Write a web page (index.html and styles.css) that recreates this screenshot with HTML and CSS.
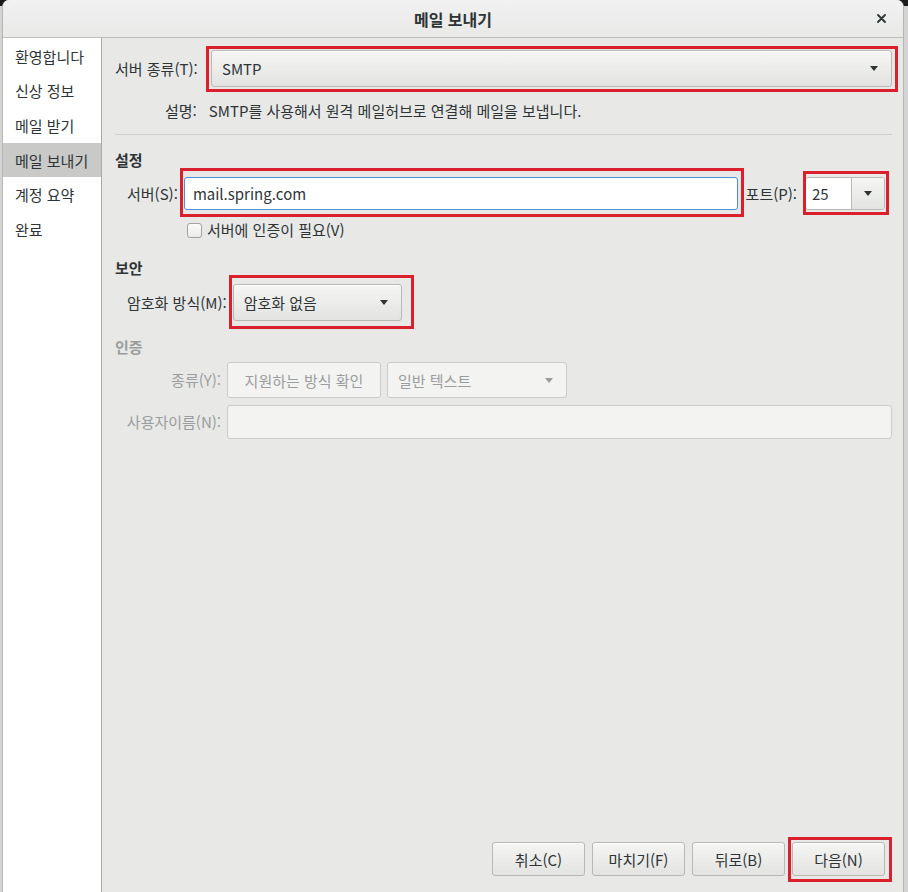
FILE: index.html
```html
<!DOCTYPE html>
<html lang="ko">
<head>
<meta charset="utf-8">
<title>메일 보내기</title>
<link rel="stylesheet" href="styles.css">
</head>
<body>
<div class="dialog">
  <header class="titlebar">
    <span class="title">메일 보내기</span>
    <span class="close"><svg width="9" height="9" viewBox="0 0 9 9"><path d="M1 1L8 8M8 1L1 8" stroke="#2e3436" stroke-width="1.8" stroke-linecap="round"/></svg></span>
  </header>
  <div class="main">
    <nav class="sidebar">
      <div class="step">환영합니다</div>
      <div class="step">신상 정보</div>
      <div class="step">메일 받기</div>
      <div class="step active">메일 보내기</div>
      <div class="step">계정 요약</div>
      <div class="step">완료</div>
    </nav>
    <section class="content">
      <div class="row type-row">
        <span class="label type-label">서버 종류(T):</span>
        <div class="combo combo-wide mark mark-smtp"><span>SMTP</span><i class="arrow"></i></div>
      </div>
      <div class="desc"><span class="desc-label">설명:</span><span>SMTP를 사용해서 원격 메일허브로 연결해 메일을 보냅니다.</span></div>
      <div class="sep"></div>
      <h3 class="heading heading-settings">설정</h3>
      <div class="row server-row">
        <span class="label server-label">서버(S):</span>
        <div class="entry focus mark mark-server">mail.spring.com</div>
        <span class="label port-label">포트(P):</span>
        <div class="spin mark mark-port"><span class="spin-value">25</span><span class="spin-btn"><i class="arrow"></i></span></div>
      </div>
      <div class="check-row"><span class="checkbox"></span><span>서버에 인증이 필요(V)</span></div>
      <h3 class="heading heading-security">보안</h3>
      <div class="row enc-row">
        <span class="label enc-label">암호화 방식(M):</span>
        <div class="combo combo-enc mark mark-enc"><span>암호화 없음</span><i class="arrow"></i></div>
      </div>
      <h3 class="heading heading-auth disabled">인증</h3>
      <div class="auth-grid">
        <span class="label disabled auth-label">종류(Y):</span>
        <div class="auth-type">
          <div class="btn btn-disabled check-btn">지원하는 방식 확인</div>
          <div class="combo combo-disabled"><span>일반 텍스트</span><i class="arrow"></i></div>
        </div>
        <span class="label disabled auth-label user-label">사용자이름(N):</span>
        <div class="entry entry-disabled user-entry"></div>
      </div>
      <div class="footer">
        <div class="btn">취소(C)</div>
        <div class="btn">마치기(F)</div>
        <div class="btn">뒤로(B)</div>
        <div class="btn mark mark-next">다음(N)</div>
      </div>
    </section>
  </div>
</div>
</body>
</html>
```
FILE: styles.css
```css
* { box-sizing: border-box; }
html, body { margin: 0; padding: 0; }
body {
  width: 908px;
  height: 892px;
  overflow: hidden;
  background: linear-gradient(#1a1a1a 0 6px, #d4d4d4 6px);
  font-family: "Noto Sans CJK KR", sans-serif;
  font-size: 15px;
  color: #2e3436;
}
.dialog {
  margin-left: 2px;
  width: 902px;
  height: 892px;
  display: flex;
  flex-direction: column;
  border-left: 1px solid #b6b6b3;
  border-right: 1px solid #b6b6b3;
  border-radius: 7px 7px 0 0;
  background: #e8e8e7;
  overflow: hidden;
}
.titlebar {
  height: 38px;
  flex: none;
  display: flex;
  align-items: center;
  justify-content: center;
  position: relative;
  background: linear-gradient(#f1f1f1, #e9e9e8);
  border-bottom: 1px solid #bdbdbb;
}
.title {
  font-weight: bold;
  font-size: 16px;
  color: #2e3436;
  line-height: 20px;
}
.close {
  position: absolute;
  right: 17px;
  top: 14px;
  display: flex;
}
.main {
  flex: 1;
  display: flex;
  min-height: 0;
}
.sidebar {
  width: 99px;
  flex: none;
  background: #ffffff;
  border-right: 1px solid #a9a9a7;
  padding-top: 1px;
}
.step {
  height: 34.6px;
  display: flex;
  align-items: center;
  padding-left: 12px;
  font-size: 15px;
  color: #2e3436;
  white-space: nowrap;
}
.step.active { background: #c9c9c8; }
.content {
  flex: 1;
  display: flex;
  flex-direction: column;
  padding: 12px 11px 16px 13px;
}
.row { display: flex; align-items: center; }
.label { white-space: nowrap; line-height: 20px; }
.type-label { width: 96px; }
.combo {
  height: 37px;
  display: flex;
  align-items: center;
  justify-content: space-between;
  padding: 0 13px 0 10px;
  border: 1px solid #b8b8b5;
  border-radius: 3px;
  background: linear-gradient(#f5f5f4, #e3e3e1);
  box-shadow: inset 0 1px #ffffff;
}
.combo-wide { flex: 1; }
.arrow {
  width: 0;
  height: 0;
  border-left: 4.5px solid transparent;
  border-right: 4.5px solid transparent;
  border-top: 5px solid #2e3436;
}
.desc {
  margin-top: 14px;
  line-height: 20px;
  display: flex;
}
.desc-label { margin-left: 50px; margin-right: 12px; }
.sep {
  margin-top: 13px;
  height: 1px;
  background: #cfcfcd;
}
.heading {
  margin: 0;
  font-size: 15px;
  font-weight: bold;
  line-height: 20px;
  color: #2e3436;
}
.heading-settings { margin-top: 15px; }
.heading-security { margin-top: 18px; }
.heading-auth { margin-top: 16px; }
.disabled { color: #9a9d9d; }
.server-row { margin-top: 7px; }
.server-label { margin-left: 12px; margin-right: 6px; }
.entry {
  height: 33px;
  display: flex;
  align-items: center;
  padding: 0 8px;
  background: #ffffff;
  border: 1px solid #b8b8b5;
  border-radius: 3px;
}
.entry.focus {
  flex: 1;
  border-color: #4a90d9;
}
.port-label { margin-left: 8px; margin-right: 8px; }
.spin {
  width: 80px;
  height: 33px;
  display: flex;
  margin-right: 7px;
  border: 1px solid #b8b8b5;
  border-radius: 3px;
  background: #ffffff;
}
.spin-value {
  flex: 1;
  display: flex;
  align-items: center;
  padding-left: 6px;
}
.spin-btn {
  width: 33px;
  display: flex;
  align-items: center;
  justify-content: center;
  border-left: 1px solid #b8b8b5;
  background: linear-gradient(#f5f5f4, #e3e3e1);
  border-radius: 0 2px 2px 0;
}
.check-row {
  margin-top: 10px;
  height: 20px;
  display: flex;
  align-items: center;
  padding-left: 72px;
  line-height: 20px;
}
.checkbox {
  width: 15px;
  height: 15px;
  margin-right: 5px;
  border: 1px solid #a2a2a0;
  border-radius: 3px;
  background: linear-gradient(#fbfbfb, #ebebea);
}
.enc-row { margin-top: 6px; }
.enc-label { margin-left: 12px; margin-right: 6px; }
.combo-enc { width: 169px; }
.auth-grid {
  margin-top: 5px;
  display: grid;
  grid-template-columns: 106px 1fr;
  column-gap: 6px;
  row-gap: 7px;
  align-items: center;
}
.auth-label { text-align: right; }
.auth-type { display: flex; gap: 6px; }
.btn {
  width: 93px;
  height: 34px;
  display: flex;
  align-items: center;
  justify-content: center;
  border: 1px solid #b8b8b5;
  border-radius: 3px;
  background: linear-gradient(#f5f5f4, #e3e3e1);
  box-shadow: inset 0 1px #ffffff;
  white-space: nowrap;
}
.btn-disabled, .combo-disabled {
  height: 36px;
  background: #f3f3f2;
  border-color: #cbcbc9;
  color: #9a9d9d;
  box-shadow: none;
}
.check-btn { width: 154px; }
.combo-disabled { width: 180px; }
.combo-disabled .arrow { border-top-color: #9a9d9d; }
.entry-disabled {
  height: 34px;
  background: #f3f3f2;
  border-color: #cbcbc9;
}
.footer {
  margin-top: auto;
  display: flex;
  justify-content: flex-end;
  gap: 7px;
  margin-right: 7px;
}
.mark { position: relative; }
.mark::after {
  content: "";
  position: absolute;
  border: 3.5px solid #d9202c;
  pointer-events: none;
}
.mark-smtp::after { left: -6px; right: -7px; top: -5px; bottom: -6px; }
.mark-server::after { left: -5px; right: -7px; top: -10px; bottom: -8px; }
.mark-port::after { left: -3px; right: -5px; top: -7px; bottom: -6px; }
.mark-enc::after { left: -5px; right: -13px; top: -10px; bottom: -9px; }
.mark-next::after { left: -5px; right: -8px; top: -6px; bottom: -7px; }
```
